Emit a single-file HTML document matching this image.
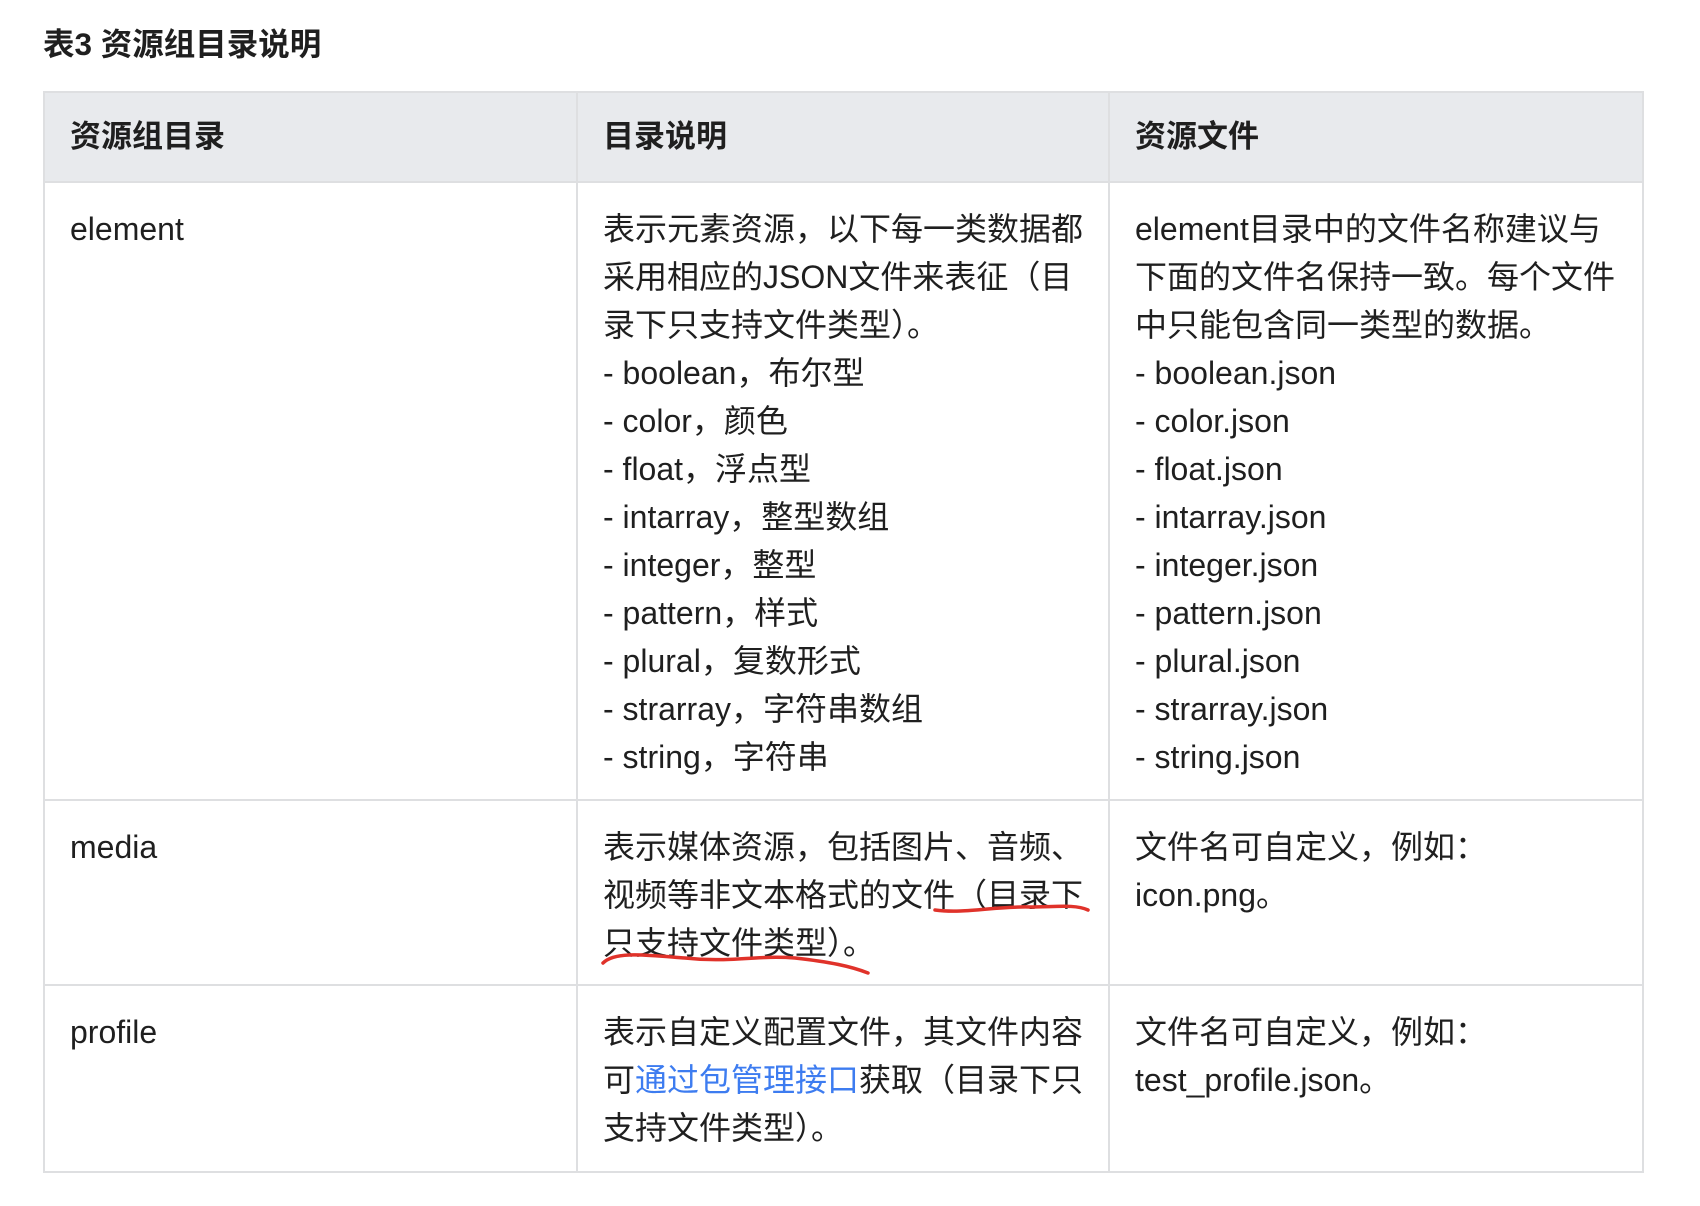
<!DOCTYPE html>
<html><head><meta charset="utf-8"><style>
body{margin:0;background:#fff;width:1700px;height:1206px;position:relative;font-family:"Liberation Sans","Noto Sans CJK SC",sans-serif;color:#1f1f1f;}
.title{position:absolute;left:43px;top:24px;font-size:31.5px;font-weight:bold;line-height:40px;}
table{position:absolute;left:43px;top:91px;border-collapse:collapse;table-layout:fixed;width:1599px;}
td,th{border:2px solid #dedfe1;vertical-align:top;text-align:left;padding:0 25px;font-size:32px;line-height:48px;white-space:nowrap;}
th{background:#e8eaed;height:88px;vertical-align:middle;font-weight:bold;font-size:31px;}
td{padding-top:22px;padding-bottom:0;}
a{color:#3d7cf0;text-decoration:none;}
</style></head><body>
<div class="title">表3 资源组目录说明</div>
<table>
<colgroup><col style="width:533px"><col style="width:532px"><col style="width:534px"></colgroup>
<tr><th>资源组目录</th><th>目录说明</th><th>资源文件</th></tr>
<tr style="height:618px"><td>element</td><td>表示元素资源，以下每一类数据都<br>采用相应的JSON文件来表征（目<br>录下只支持文件类型）。<br>- boolean，布尔型<br>- color，颜色<br>- float，浮点型<br>- intarray，整型数组<br>- integer，整型<br>- pattern，样式<br>- plural，复数形式<br>- strarray，字符串数组<br>- string，字符串</td><td>element目录中的文件名称建议与<br>下面的文件名保持一致。每个文件<br>中只能包含同一类型的数据。<br>- boolean.json<br>- color.json<br>- float.json<br>- intarray.json<br>- integer.json<br>- pattern.json<br>- plural.json<br>- strarray.json<br>- string.json</td></tr>
<tr style="height:185px"><td>media</td><td>表示媒体资源，包括图片、音频、<br>视频等非文本格式的文件（目录下<br>只支持文件类型）。</td><td>文件名可自定义，例如：<br>icon.png。</td></tr>
<tr style="height:187px"><td>profile</td><td>表示自定义配置文件，其文件内容<br>可<a>通过包管理接口</a>获取（目录下只<br>支持文件类型）。</td><td>文件名可自定义，例如：<br>test_profile.json。</td></tr>
</table>
<svg style="position:absolute;left:0;top:0" width="1700" height="1206">
<path d="M935 910 C965 914 995 906 1030 907 C1055 907 1075 904 1088 910" fill="none" stroke="#e0322a" stroke-width="3.5" stroke-linecap="round"/>
<path d="M603 963 C615 951 645 955 685 958 C730 963 755 955 795 958 C830 962 850 966 868 973" fill="none" stroke="#e0322a" stroke-width="3.5" stroke-linecap="round"/>
</svg>
</body></html>
